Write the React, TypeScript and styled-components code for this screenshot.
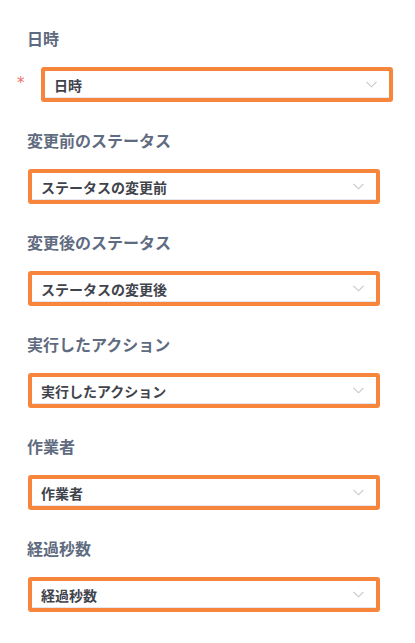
import React from "react";
import styled, { createGlobalStyle } from "styled-components";

const GlobalStyle = createGlobalStyle`
  body {
    margin: 0;
    background: #ffffff;
    font-family: "Noto Sans CJK JP", "Noto Sans", sans-serif;
  }
`;

const Form = styled.div`
  padding: 27px 0 0 28px;
`;

const Item = styled.div`
  margin-bottom: 27px;
`;

const Label = styled.div`
  font-size: 16px;
  line-height: 22px;
  font-weight: bold;
  color: #5f6b80;
  margin-bottom: 18px;
  margin-left: -1px;
`;

const Row = styled.div`
  display: flex;
  align-items: center;
`;

const Asterisk = styled.span`
  width: 24px;
  margin-left: -11px;
  color: #f56c6c;
  font-size: 15px;
  font-family: "DejaVu Sans", sans-serif;
  line-height: 1;
  padding-bottom: 2px;
`;

const SelectBox = styled.div`
  box-sizing: border-box;
  width: 352px;
  height: 35px;
  border: 4px solid #f7853b;
  border-radius: 3px;
  display: flex;
  align-items: center;
  justify-content: space-between;
  padding: 0 12px 0 9px;
  box-shadow: inset 0 -1px 0 #e4e7ed;
  background: #ffffff;
`;

const Value = styled.span`
  font-size: 14px;
  font-weight: bold;
  color: #3f434c;
`;

const Chevron = () => (
  <svg width="11" height="7" viewBox="0 0 11 7" fill="none">
    <path d="M0.5 0.8 L5.5 5.8 L10.5 0.8" stroke="#c4c7ce" strokeWidth="1.1" />
  </svg>
);

type Field = { label: string; placeholder: string; required?: boolean };

const fields: Field[] = [
  { label: "日時", placeholder: "日時", required: true },
  { label: "変更前のステータス", placeholder: "ステータスの変更前" },
  { label: "変更後のステータス", placeholder: "ステータスの変更後" },
  { label: "実行したアクション", placeholder: "実行したアクション" },
  { label: "作業者", placeholder: "作業者" },
  { label: "経過秒数", placeholder: "経過秒数" },
];

export default function App() {
  return (
    <>
      <GlobalStyle />
      <Form>
        {fields.map((f) => (
          <Item key={f.label}>
            <Label>{f.label}</Label>
            <Row>
              {f.required && <Asterisk>*</Asterisk>}
              <SelectBox>
                <Value>{f.placeholder}</Value>
                <Chevron />
              </SelectBox>
            </Row>
          </Item>
        ))}
      </Form>
    </>
  );
}
